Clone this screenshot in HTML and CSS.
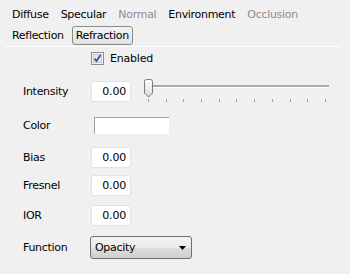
FILE: index.html
```html
<!DOCTYPE html>
<html lang="en">
<head>
    <meta charset="UTF-8">
    <title>Material - Refraction</title>
    <link rel="stylesheet" href="styles.css">
</head>
<body>
    <div class="tabs">
        <div class="tab-row">
            <span class="tab">Diffuse</span>
            <span class="tab">Specular</span>
            <span class="tab disabled">Normal</span>
            <span class="tab">Environment</span>
            <span class="tab disabled">Occlusion</span>
        </div>
        <div class="tab-row">
            <span class="tab">Reflection</span>
            <span class="tab active">Refraction</span>
        </div>
    </div>

    <div class="panel">
        <div class="check-row">
            <span class="checkbox">
                <svg width="13" height="13" viewBox="0 0 13 13">
                    <rect x="0.5" y="0.5" width="12" height="12" fill="#f4f4f4" stroke="#8f8f8f"/>
                    <rect x="2.5" y="2.5" width="8" height="8" fill="#e4e9f0" stroke="#c0c8d2"/>
                    <path d="M3.5 6.5 L5.5 9 L9.5 3" fill="none" stroke="#2a4fa8" stroke-width="1.7"/>
                </svg>
            </span>
            <span>Enabled</span>
        </div>

        <div class="row row-intensity">
            <label>Intensity</label>
            <div class="num">0.00</div>
            <div class="slider">
                <div class="track"></div>
                <svg class="thumb" width="11" height="19" viewBox="0 0 11 19">
                    <defs>
                        <linearGradient id="tg" x1="0" y1="0" x2="0" y2="1">
                            <stop offset="0" stop-color="#fbfbfb"/>
                            <stop offset="1" stop-color="#dcdcdc"/>
                        </linearGradient>
                    </defs>
                    <path d="M1.5 2.5 Q1.5 0.5 3.5 0.5 L7.5 0.5 Q9.5 0.5 9.5 2.5 L9.5 14 L5.5 18 L1.5 14 Z" fill="url(#tg)" stroke="#7a7a7a"/>
                </svg>
                <div class="ticks">
                    <i></i><i></i><i></i><i></i><i></i><i></i><i></i><i></i><i></i><i></i><i></i>
                </div>
            </div>
        </div>

        <div class="row row-color">
            <label>Color</label>
            <div class="swatch"></div>
        </div>

        <div class="row row-bias">
            <label>Bias</label>
            <div class="num">0.00</div>
        </div>

        <div class="row row-fresnel">
            <label>Fresnel</label>
            <div class="num">0.00</div>
        </div>

        <div class="row row-ior">
            <label>IOR</label>
            <div class="num">0.00</div>
        </div>

        <div class="row row-function">
            <label>Function</label>
            <div class="select">
                <span>Opacity</span>
                <svg width="7" height="4" viewBox="0 0 7 4"><path d="M0 0 L7 0 L3.5 4 Z" fill="#000"/></svg>
            </div>
        </div>
    </div>
</body>
</html>
```

FILE: styles.css
```css
* {
    margin: 0;
    padding: 0;
    box-sizing: border-box;
}

body {
    font-family: 'DejaVu Sans', sans-serif;
    font-size: 11px;
    color: #000;
    background: #f0f0f0;
    width: 350px;
    height: 274px;
    overflow: hidden;
}

.tabs {
    padding: 4px 0 0 8px;
}

.tab-row {
    display: flex;
    align-items: center;
    gap: 4px;
    height: 21px;
}

.tab {
    padding: 2px 3px;
    border: 1px solid transparent;
    border-radius: 3px;
    letter-spacing: -0.3px;
}

.tab.disabled {
    color: #8d8d8d;
}

.tab.active {
    border-color: #8a8a8a;
    background: linear-gradient(#f4f4f4, #e2e2e2);
}

.panel {
    margin: 0 9px 0 5px;
    border-top: 1px solid #fff;
    padding-top: 5px;
}

.check-row {
    display: flex;
    align-items: center;
    gap: 6px;
    padding-left: 86px;
    height: 13px;
    letter-spacing: -0.2px;
}

.checkbox {
    display: flex;
}

.row {
    display: flex;
    align-items: center;
    padding-left: 18px;
}

.row label {
    width: 68px;
    letter-spacing: -0.3px;
}

.row-intensity { margin-top: 16px; height: 21px; }
.row-color { margin-top: 15px; height: 17px; }
.row-bias { margin-top: 13px; height: 21px; }
.row-fresnel { margin-top: 7px; height: 21px; }
.row-ior { margin-top: 9px; height: 21px; }
.row-function { margin-top: 10px; height: 23px; }

.num {
    width: 40px;
    height: 21px;
    background: #fff;
    border: 1px solid #e2e2e2;
    border-radius: 2px;
    text-align: right;
    padding: 3px 4px 0 0;
    letter-spacing: -0.2px;
}

.slider {
    position: relative;
    width: 190px;
    height: 21px;
    margin-left: 12px;
}

.track {
    position: absolute;
    left: 6px;
    right: 4px;
    top: 4px;
    height: 2px;
    background: #a9a9a9;
    border-bottom: 1px solid #fff;
    box-sizing: content-box;
}

.thumb {
    position: absolute;
    left: 0;
    top: -2px;
}

.ticks {
    position: absolute;
    left: 5px;
    right: 7px;
    top: 18px;
    display: flex;
    justify-content: space-between;
}

.ticks i {
    width: 1px;
    height: 3px;
    background: #a0a0a0;
}

.swatch {
    width: 75px;
    height: 17px;
    margin-left: 3px;
    background: #fff;
    border-top: 1px solid #a0a0a0;
    border-left: 1px solid #a0a0a0;
}

.select {
    display: flex;
    align-items: center;
    justify-content: space-between;
    width: 102px;
    height: 23px;
    margin-left: -1px;
    padding: 0 5px 0 4px;
    border: 1px solid #707070;
    border-radius: 3px;
    background: linear-gradient(#f2f2f2 0%, #ebebeb 50%, #dddddd 51%, #cfcfcf 100%);
    letter-spacing: -0.3px;
}
```
